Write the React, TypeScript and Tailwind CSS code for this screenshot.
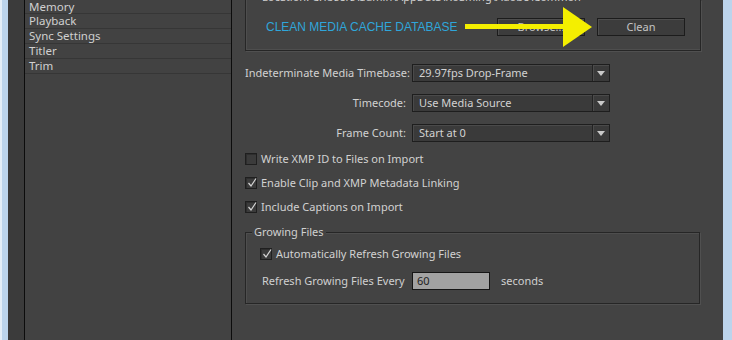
import React from "react";

const font = { fontFamily: '"Noto Sans", "Open Sans", sans-serif' };

function Select({ value }: { value: string }) {
  return (
    <div className="flex h-[18px] w-[198px] items-stretch border border-[#1e1e1e] bg-[#3a3a3a] shadow-[inset_1px_1px_0_#4a4a4a]">
      <div className="flex flex-1 items-center whitespace-nowrap pl-[6px] text-[11px] text-[#d2d2d2]">{value}</div>
      <div className="flex w-[17px] items-center justify-center border-l border-[#232323] shadow-[inset_1px_0_0_#4c4c4c]">
        <svg width="8" height="5" viewBox="0 0 8 5">
          <polygon points="0,0 8,0 4,5" fill="#c9c9c9" />
        </svg>
      </div>
    </div>
  );
}

function Row({ label, value, mt }: { label: string; value: string; mt: string }) {
  return (
    <div className={`flex items-center ${mt}`}>
      <div className="w-[161px] whitespace-nowrap text-right text-[11px] text-[#d2d2d2]">{label}</div>
      <div className="ml-[6px]">
        <Select value={value} />
      </div>
    </div>
  );
}

function Check({ checked }: { checked: boolean }) {
  return (
    <div className="relative h-[12px] w-[12px] shrink-0 border border-[#1f1f1f] bg-[#3b3b3b] shadow-[inset_1px_1px_0_#2e2e2e]">
      {checked && (
        <svg className="absolute left-[1px] top-[0px]" width="10" height="10" viewBox="0 0 10 10">
          <polyline points="1.5,5 4,8 9,0.5" fill="none" stroke="#d6d6d6" strokeWidth="1.2" />
        </svg>
      )}
    </div>
  );
}

function CheckRow({ checked, label, mt }: { checked: boolean; label: string; mt: string }) {
  return (
    <div className={`flex items-center ${mt}`}>
      <Check checked={checked} />
      <span className="ml-[4px] whitespace-nowrap text-[11px] leading-[12px] text-[#d2d2d2]">{label}</span>
    </div>
  );
}

function Button({ label }: { label: string }) {
  return (
    <div className="flex h-[18px] w-[88px] items-center justify-center border border-[#1c1c1c] bg-[#3c3c3c] text-[11px] text-[#c4c4c4] shadow-[inset_1px_1px_0_#4e4e4e]">
      {label}
    </div>
  );
}

export default function App() {
  const items = ["Memory", "Playback", "Sync Settings", "Titler", "Trim"];
  return (
    <div className="flex h-[340px] w-[732px] overflow-hidden bg-[#434343]" style={font}>
      <div className="flex w-[8px]">
        <div className="w-[2px] bg-[#e4eef8]" />
        <div className="flex-1 bg-[#bcd4ec]" />
      </div>
      <div className="w-[16px] bg-[#3b3b3b]" />
      <div className="flex w-[208px] flex-col border-x border-[#0c0c0c] bg-[#424242]">
        {items.map((it, i) => (
          <div
            key={it}
            className={`flex items-center border-b border-[#363636] pl-[4px] text-[11.5px] text-[#d0d0d0] ${i === 0 ? "h-[14px]" : "h-[15px]"}`}
          >
            {it}
          </div>
        ))}
      </div>
      <div className="relative flex w-[491px] flex-col pl-[13px]">
        <div className="flex h-[51px] w-[456px] flex-col border-x border-b border-[#262626] shadow-[1px_1px_0_#505050,inset_1px_-1px_0_#4e4e4e]">
          <div className="-mt-[9px] h-[12px] whitespace-nowrap pl-[16px] text-[11px] leading-[12px] text-[#d0d0d0]">
            Location: C:\Users\admin\AppData\Roaming\Adobe\Common
          </div>
          <div className="mt-[15px] flex items-center">
            <div
              className="ml-[20px] w-[231px] whitespace-nowrap text-[12px] text-[#2fa6da]"
              style={{ fontFamily: '"Liberation Sans", Arial, sans-serif' }}
            >
              CLEAN MEDIA CACHE DATABASE
            </div>
            <Button label="Browse..." />
            <div className="ml-[12px]">
              <Button label="Clean" />
            </div>
          </div>
        </div>

        <Row label="Indeterminate Media Timebase:" value="29.97fps Drop-Frame" mt="mt-[13px]" />
        <Row label="Timecode:" value="Use Media Source" mt="mt-[12px]" />
        <Row label="Frame Count:" value="Start at 0" mt="mt-[12px]" />

        <CheckRow checked={false} label="Write XMP ID to Files on Import" mt="mt-[11px]" />
        <CheckRow checked={true} label="Enable Clip and XMP Metadata Linking" mt="mt-[12px]" />
        <CheckRow checked={true} label="Include Captions on Import" mt="mt-[12px]" />

        <div className="relative mt-[19px] h-[72px] w-[455px] border border-[#262626] shadow-[1px_1px_0_#505050,inset_1px_1px_0_#4e4e4e]">
          <div className="absolute -top-[8px] left-[6px] bg-[#434343] px-[2px] text-[11px] leading-[14px] text-[#d0d0d0]">
            Growing Files
          </div>
          <div className="ml-[14px] mt-[15px]">
            <CheckRow checked={true} label="Automatically Refresh Growing Files" mt="mt-0" />
          </div>
          <div className="mt-[12px] flex items-center pl-[16px]">
            <span className="w-[150px] whitespace-nowrap text-[11px] text-[#d0d0d0]">Refresh Growing Files Every</span>
            <div className="flex h-[18px] w-[78px] items-center border border-[#161616] bg-[#a2a2a2] pl-[4px] text-[11px] text-[#1e1e1e]">
              60
            </div>
            <span className="ml-[11px] text-[11px] text-[#d0d0d0]">seconds</span>
          </div>
        </div>

        <svg className="absolute left-[233px] top-[7px]" width="128" height="41" viewBox="0 0 128 41">
          <rect x="0" y="17" width="100" height="5" fill="#f4ef00" />
          <polygon points="98,0 127,20 98,40" fill="#f4ef00" />
        </svg>
      </div>
      <div className="w-[9px] bg-[#bcd4ec]" />
    </div>
  );
}
